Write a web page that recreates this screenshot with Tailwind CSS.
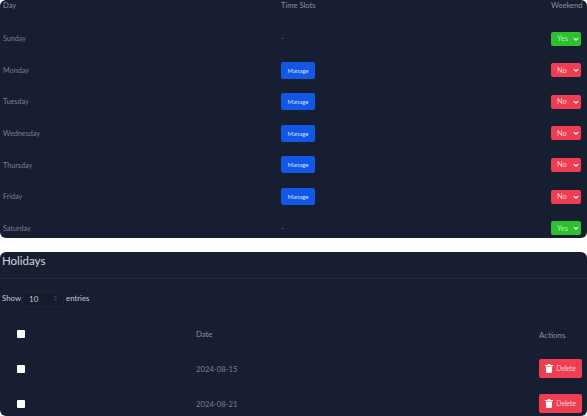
<!DOCTYPE html>
<html lang="en">
<head>
  <meta charset="UTF-8">
  <title>Schedule</title>
  <script src="https://cdn.jsdelivr.net/npm/@tailwindcss/browser@4"></script>
</head>
<body class="bg-white font-['Lato',sans-serif] antialiased overflow-hidden">
  <!-- Days card -->
  <div class="h-[238px] rounded-[6px] bg-[#171e31] pl-[3px] pr-[6px] text-[7.2px] text-[#7a7f8e] overflow-hidden">
    <div class="grid grid-cols-[278px_1fr_auto] h-[22.8px] text-[7.6px] leading-[10px] text-[#8b909c]">
      <span>Day</span>
      <span>Time Slots</span>
      <span class="-mr-[1px] w-[31px]">Weekend</span>
    </div>
    <div class="grid grid-cols-[278px_1fr_auto] grid-rows-[repeat(7,31.6px)] items-center [&>span]:pt-[2px]">
      <span>Sunday</span>
      <span>-</span>
      <div class="flex items-center justify-between w-[30px] h-[14px] rounded-[2px] bg-[#2fc02f] pl-[6px] pr-[2px] text-[7.5px] text-[#b9eab9]">Yes
        <svg class="w-[6px] h-[6px] text-white" viewBox="0 0 10 10" fill="none" stroke="currentColor" stroke-width="2"><path d="M1.500 3.500 5 7l3.500-3.500"/></svg>
      </div>

      <span>Monday</span>
      <button class="w-[34px] h-[17px] rounded-[2px] bg-[#1257e6] text-[6px] text-[#d5e2fb]">Manage</button>
      <div class="flex items-center justify-between w-[30px] h-[14px] rounded-[2px] bg-[#ef3e52] pl-[6px] pr-[2px] text-[7.5px] text-[#fbd0d5]">No
        <svg class="w-[6px] h-[6px] text-white" viewBox="0 0 10 10" fill="none" stroke="currentColor" stroke-width="2"><path d="M1.500 3.500 5 7l3.500-3.500"/></svg>
      </div>

      <span>Tuesday</span>
      <button class="w-[34px] h-[17px] rounded-[2px] bg-[#1257e6] text-[6px] text-[#d5e2fb]">Manage</button>
      <div class="flex items-center justify-between w-[30px] h-[14px] rounded-[2px] bg-[#ef3e52] pl-[6px] pr-[2px] text-[7.5px] text-[#fbd0d5]">No
        <svg class="w-[6px] h-[6px] text-white" viewBox="0 0 10 10" fill="none" stroke="currentColor" stroke-width="2"><path d="M1.500 3.500 5 7l3.500-3.500"/></svg>
      </div>

      <span>Wednesday</span>
      <button class="w-[34px] h-[17px] rounded-[2px] bg-[#1257e6] text-[6px] text-[#d5e2fb]">Manage</button>
      <div class="flex items-center justify-between w-[30px] h-[14px] rounded-[2px] bg-[#ef3e52] pl-[6px] pr-[2px] text-[7.5px] text-[#fbd0d5]">No
        <svg class="w-[6px] h-[6px] text-white" viewBox="0 0 10 10" fill="none" stroke="currentColor" stroke-width="2"><path d="M1.500 3.500 5 7l3.500-3.500"/></svg>
      </div>

      <span>Thursday</span>
      <button class="w-[34px] h-[17px] rounded-[2px] bg-[#1257e6] text-[6px] text-[#d5e2fb]">Manage</button>
      <div class="flex items-center justify-between w-[30px] h-[14px] rounded-[2px] bg-[#ef3e52] pl-[6px] pr-[2px] text-[7.5px] text-[#fbd0d5]">No
        <svg class="w-[6px] h-[6px] text-white" viewBox="0 0 10 10" fill="none" stroke="currentColor" stroke-width="2"><path d="M1.500 3.500 5 7l3.500-3.500"/></svg>
      </div>

      <span>Friday</span>
      <button class="w-[34px] h-[17px] rounded-[2px] bg-[#1257e6] text-[6px] text-[#d5e2fb]">Manage</button>
      <div class="flex items-center justify-between w-[30px] h-[14px] rounded-[2px] bg-[#ef3e52] pl-[6px] pr-[2px] text-[7.5px] text-[#fbd0d5]">No
        <svg class="w-[6px] h-[6px] text-white" viewBox="0 0 10 10" fill="none" stroke="currentColor" stroke-width="2"><path d="M1.500 3.500 5 7l3.500-3.500"/></svg>
      </div>

      <span>Saturday</span>
      <span>-</span>
      <div class="flex items-center justify-between w-[30px] h-[14px] rounded-[2px] bg-[#2fc02f] pl-[6px] pr-[2px] text-[7.5px] text-[#b9eab9]">Yes
        <svg class="w-[6px] h-[6px] text-white" viewBox="0 0 10 10" fill="none" stroke="currentColor" stroke-width="2"><path d="M1.500 3.500 5 7l3.500-3.500"/></svg>
      </div>
    </div>
  </div>

  <!-- Holidays card -->
  <div class="mt-[14px] h-[164px] rounded-[6px] bg-[#171e31] text-[#7a7f8e] overflow-hidden">
    <div class="h-[27px] border-b border-[#222a3d] pl-[2px] pt-[1px] text-[11.500px] leading-[16px] text-[#d3d6dc]">Holidays</div>
    <div class="flex items-center h-[37px] pl-[2px] pt-[2px] text-[7.800px] text-[#c5c8cf]">
      Show
      <div class="flex items-center justify-between w-[41px] h-[16px] mx-[2px] rounded-[2px] border border-[#1d2438] bg-[#161c2e] pl-[5px] pr-[5px] text-[8px]">10
        <svg class="w-[5px] h-[7px] text-[#3b4254]" viewBox="0 0 6 10" fill="currentColor"><path d="M3 1 5.500 4h-5zM3 9 .5 6h5z"/></svg>
      </div>
      entries
    </div>
    <div class="grid grid-cols-[196px_1fr_auto] grid-rows-[repeat(3,35px)] items-center pr-[5px] text-[7.700px]">
      <span class="ml-[17px] w-[8px] h-[8px] rounded-[1px] bg-white"></span>
      <span class="pt-[2px] text-[#8b909c]">Date</span>
      <span class="pt-[2px] w-[43px] text-[8px] text-[#8b909c]">Actions</span>

      <span class="ml-[17px] w-[8px] h-[8px] rounded-[1px] bg-white"></span>
      <span class="pt-[2px]">2024-08-15</span>
      <button class="flex items-center justify-center gap-[3px] w-[43px] h-[19px] rounded-[2px] bg-[#ef3e52] text-[7px] tracking-[-0.2px] text-[#fbd0d5]">
        <svg class="w-[8px] h-[9px] text-white" viewBox="0 0 8 9" fill="currentColor"><path d="M0 1h2.500l.4-1h2.200l.4 1H8v1H0zM.8 2.500h6.400L6.700 9H1.300z"/></svg>
        Delete
      </button>

      <span class="ml-[17px] w-[8px] h-[8px] rounded-[1px] bg-white"></span>
      <span class="pt-[2px]">2024-08-21</span>
      <button class="flex items-center justify-center gap-[3px] w-[43px] h-[19px] rounded-[2px] bg-[#ef3e52] text-[7px] tracking-[-0.2px] text-[#fbd0d5]">
        <svg class="w-[8px] h-[9px] text-white" viewBox="0 0 8 9" fill="currentColor"><path d="M0 1h2.500l.4-1h2.200l.4 1H8v1H0zM.8 2.500h6.400L6.700 9H1.300z"/></svg>
        Delete
      </button>
    </div>
  </div>
</body>
</html>
